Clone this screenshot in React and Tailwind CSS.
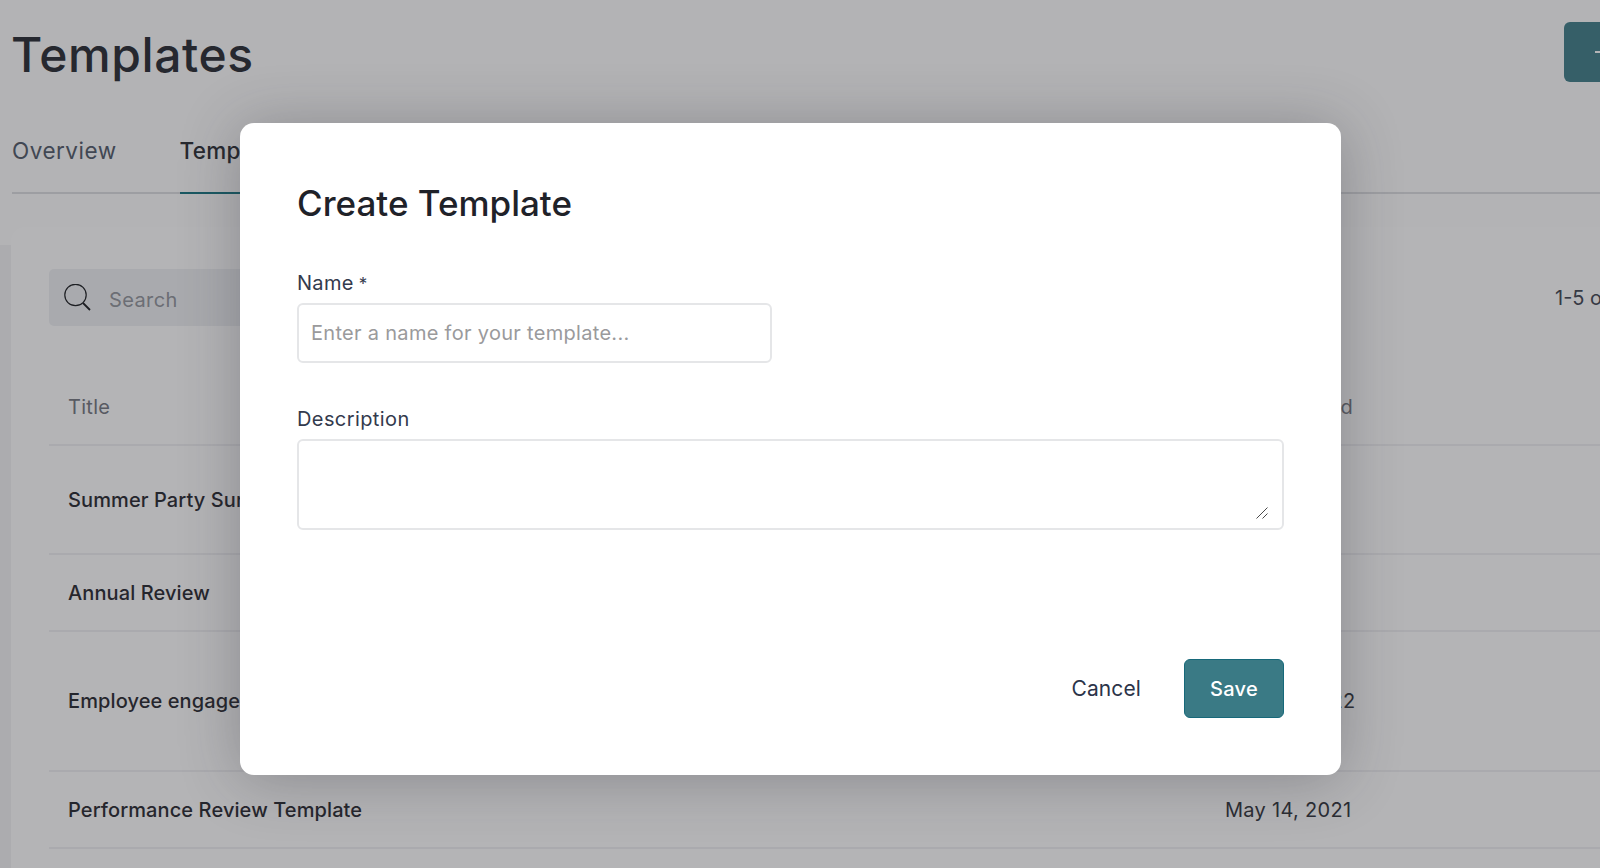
import React from "react";

const font = { fontFamily: '"Inter", "Noto Sans", sans-serif' };

const rows = [
  { title: "Summer Party Survey", date: "Apr 2, 2022", h: "h-[109px]" },
  { title: "Annual Review", date: "Jul 1, 2021", h: "h-[77px]" },
  { title: "Employee engagement survey", date: "May 14, 2022", h: "h-[140px]" },
  { title: "Performance Review Template", date: "May 14, 2021", h: "h-[77px]" },
];

function Row({ title, date, h }) {
  return (
    <div className={`flex items-center border-b-2 border-[#eff0f2] pl-[19px] text-[20px] ${h}`}>
      <div className="w-[1157px] font-medium tracking-[0.1px] text-[#1f2229]">{title}</div>
      <div className="text-[#2a2d34] tracking-[0.3px]">{date}</div>
    </div>
  );
}

export default function App() {
  return (
    <div className="relative h-[868px] w-[1600px] overflow-hidden bg-[#fdfdfe]" style={font}>
      <div className="w-[1740px]">
        <header className="flex h-[112px] items-start justify-between pl-[11px] pt-[23px]">
          <h1 className="text-[48px] font-medium leading-[64px] tracking-[0.6px] text-[#22252c]">Templates</h1>
          <button className="mr-[-24px] -mt-[1px] flex h-[60px] w-[200px] items-center gap-2 rounded-[6px] bg-[#3a7a85] pl-[31px] text-[20px] font-medium text-white">
            <span className="block h-[2px] w-[14px] bg-white" />
            <span>Create</span>
          </button>
        </header>

        <nav className="ml-[12px] flex h-[82px] items-end gap-[63px] border-b-2 border-[#dcdde0] text-[22.5px]">
          <div className="pb-[24px] text-[#4c5564] tracking-[0.5px]">Overview</div>
          <div className="-mb-[2px] w-[160px] border-b-2 border-[#0f6f7c] pb-[24px] font-medium text-[#23262d] tracking-[0.3px]">Templates</div>
        </nav>

        <div className="flex">
          <div className="mt-[51px] h-[640px] w-[11px] bg-[#f2f2f4]" />
          <main className="mt-[33px] h-[660px] flex-1 rounded-tl-[14px] bg-white pl-[38px] pt-[42px]">
            <div className="flex items-center justify-between">
              <div className="flex h-[57px] w-[560px] items-center rounded-[5px] bg-[#eef0f3] pl-[15px]">
                <svg width="27" height="27" viewBox="0 0 27 27" fill="none" className="text-[#14161a]">
                  <circle cx="11.5" cy="11" r="10.7" stroke="currentColor" strokeWidth="1.2" />
                  <path d="M19 19l7 7" stroke="currentColor" strokeWidth="1.8" />
                </svg>
                <span className="ml-[18px] pt-[4px] text-[20px] tracking-[0.4px] text-[#8f929a]">Search</span>
              </div>
              <div className="w-[185px] text-[20px] text-[#3a404d]">1-5 of 5</div>
            </div>

            <div className="mt-[46px] flex h-[74px] items-start pl-[19px] text-[20px] text-[#6f737c] border-b-2 border-[#eff0f2] pt-[20px] tracking-[0.3px]">
              <div className="w-[1157px]">Title</div>
              <div>Date Created</div>
            </div>
            {rows.map((r) => (
              <Row key={r.title} {...r} />
            ))}
          </main>
        </div>
      </div>

      <div className="absolute inset-0 bg-[rgba(47,48,52,0.36)] pl-[240px] pt-[123px]">
        <section className="flex h-[652px] w-[1101px] flex-col rounded-[14px] bg-white px-[57px] pb-[57px] pt-[55px] shadow-[0_4px_60px_rgba(40,40,50,0.3)]">
          <h2 className="text-[35px] font-medium leading-[50px] tracking-[0px] text-[#1f2229]">Create Template</h2>

          <label className="mt-[39px] block text-[20px] leading-[32px] tracking-[0.3px] text-[#333a4d]">
            Name<span className="ml-[5px] text-[17px]">*</span>
          </label>
          <input
            className="mt-[3px] h-[60px] w-[475px] rounded-[6px] border-2 border-[#e5e6e8] bg-white px-[12px] text-[20px] tracking-[0.3px] outline-none placeholder:text-[#9a9a9c]"
            placeholder="Enter a name for your template..."
          />

          <label className="mt-[40px] block text-[20px] leading-[32px] tracking-[0.4px] text-[#333a4d]">Description</label>
          <div className="relative mt-[4px]">
            <textarea className="block h-[91px] w-full resize-none rounded-[6px] border-2 border-[#e5e6e8] bg-white outline-none" />
            <svg width="12" height="12" viewBox="0 0 12 12" className="absolute bottom-[11px] right-[16px] text-[#4a4a4a]" fill="none" stroke="currentColor" strokeWidth="1">
              <path d="M0.5 11.5L11.5 0.5M6.5 11.5L11.5 6.5" />
            </svg>
          </div>

          <div className="mt-auto flex items-center justify-end gap-[43px]">
            <button className="text-[21px] tracking-[0.1px] text-[#2c3449]">Cancel</button>
            <button className="h-[59px] w-[100px] rounded-[6px] border border-[#17697a] bg-[#3a7a85] text-[20px] font-medium tracking-[0.3px] text-white">Save</button>
          </div>
        </section>
      </div>
    </div>
  );
}
